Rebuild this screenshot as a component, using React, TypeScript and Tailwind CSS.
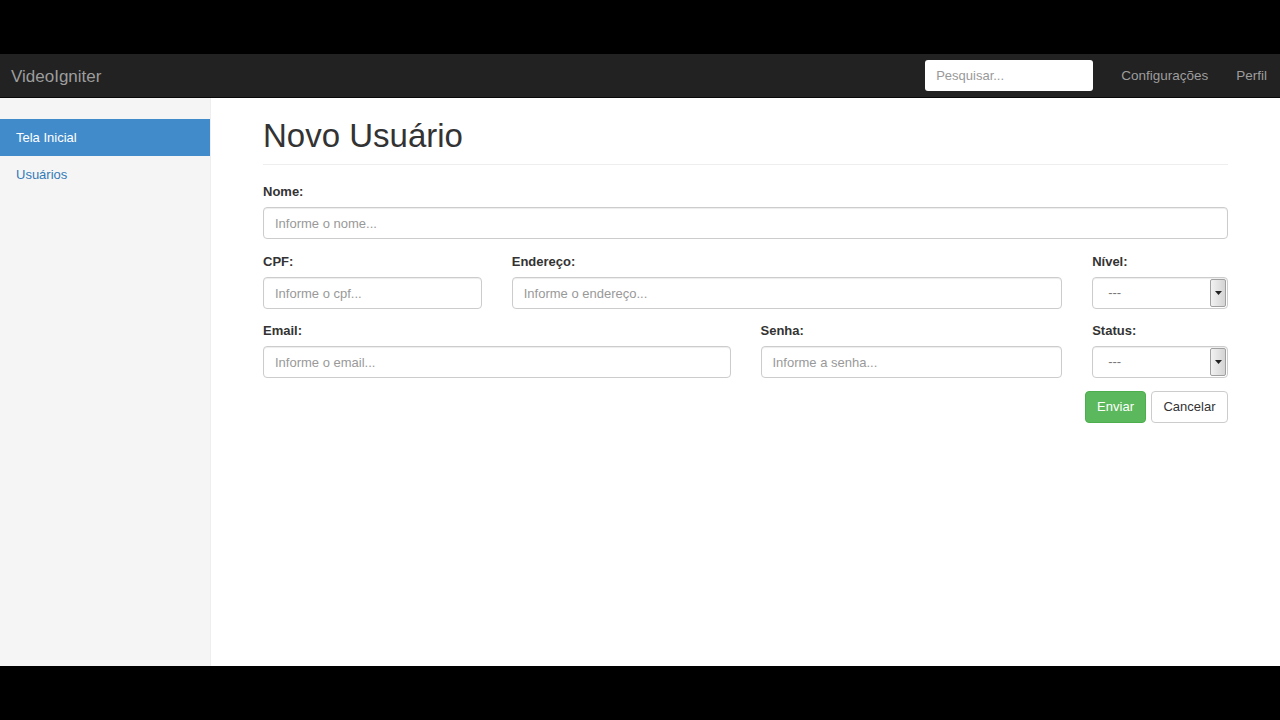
import React from 'react';

function Field({ label, placeholder, className }: { label: string; placeholder: string; className: string }) {
  return (
    <div className={className}>
      <label className="block h-5 leading-5 mb-[5px] text-[13px] font-bold text-[#333]">{label}</label>
      <input
        type="text"
        placeholder={placeholder}
        className="w-full h-[32px] px-[11px] text-[13px] text-[#555] placeholder:text-[#999] bg-white border border-[#ccc] rounded-[4px] shadow-[inset_0_1px_1px_rgba(0,0,0,0.075)] outline-none"
      />
    </div>
  );
}

function FakeSelect({ label, className }: { label: string; className: string }) {
  return (
    <div className={className}>
      <label className="block h-5 leading-5 mb-[5px] text-[13px] font-bold text-[#333]">{label}</label>
      <div className="flex items-stretch w-full h-[32px] bg-white border border-[#ccc] rounded-[4px] shadow-[inset_0_1px_1px_rgba(0,0,0,0.075)] overflow-hidden">
        <span className="flex-1 flex items-center pl-[15px] text-[13px] text-[#777]">---</span>
        <span className="w-[16px] my-[1px] mr-[1px] flex items-center justify-center border border-[#a0a0a0] rounded-[2px] bg-gradient-to-r from-[#f2f2f2] to-[#d4d4d4]">
          <svg width="7" height="4" viewBox="0 0 7 4">
            <polygon points="0,0 7,0 3.5,4" fill="#222" />
          </svg>
        </span>
      </div>
    </div>
  );
}

export default function App() {
  return (
    <div className="w-[1280px] h-[720px] bg-black flex flex-col font-['Liberation_Sans',Arial,sans-serif]">
      <div className="h-[54px]" />
      <nav className="h-[44px] bg-[#222] border-b border-[#080808] flex items-center">
        <span className="pl-[11px] pt-[2px] text-[17px] text-[#9d9d9d]">VideoIgniter</span>
        <div className="flex-1" />
        <input
          type="text"
          placeholder="Pesquisar..."
          className="w-[168px] h-[31px] px-[11px] text-[13px] bg-white rounded-[3px] placeholder:text-[#999] outline-none"
        />
        <span className="ml-[28px] pt-[2px] text-[13.5px] text-[#9d9d9d]">Configurações</span>
        <span className="ml-[28px] mr-[13px] pt-[2px] text-[13.5px] text-[#9d9d9d]">Perfil</span>
      </nav>
      <div className="h-[568px] flex bg-white">
        <aside className="w-[211px] bg-[#f5f5f5] border-r border-[#eee] pt-[21px]">
          <div className="h-[37px] flex items-center pl-[16px] bg-[#428bca] text-white text-[13px]">Tela Inicial</div>
          <div className="h-[37px] flex items-center pl-[16px] text-[#337ab7] text-[13px]">Usuários</div>
        </aside>
        <main className="flex-1 px-[52px] pt-[18px]">
          <h1 className="text-[33px] leading-[39px] text-[#333] pb-[9px] border-b border-[#eee] mb-[17px]">Novo Usuário</h1>
          <div className="grid grid-cols-12 gap-x-[30px]">
            <Field className="col-span-12 mb-[13px]" label="Nome:" placeholder="Informe o nome..." />
            <Field className="col-span-3 mb-[12px]" label="CPF:" placeholder="Informe o cpf..." />
            <Field className="col-span-7 mb-[12px]" label="Endereço:" placeholder="Informe o endereço..." />
            <FakeSelect className="col-span-2 mb-[12px]" label="Nível:" />
            <Field className="col-span-6 mb-[13px]" label="Email:" placeholder="Informe o email..." />
            <Field className="col-span-4 mb-[13px]" label="Senha:" placeholder="Informe a senha..." />
            <FakeSelect className="col-span-2 mb-[13px]" label="Status:" />
          </div>
          <div className="flex justify-end gap-[5px]">
            <button className="h-[32px] px-[11px] text-[13px] text-white bg-[#5cb85c] border border-[#4cae4c] rounded-[4px]">Enviar</button>
            <button className="h-[32px] px-[11.5px] text-[13px] text-[#333] bg-white border border-[#ccc] rounded-[4px]">Cancelar</button>
          </div>
        </main>
      </div>
      <div className="flex-1" />
    </div>
  );
}
